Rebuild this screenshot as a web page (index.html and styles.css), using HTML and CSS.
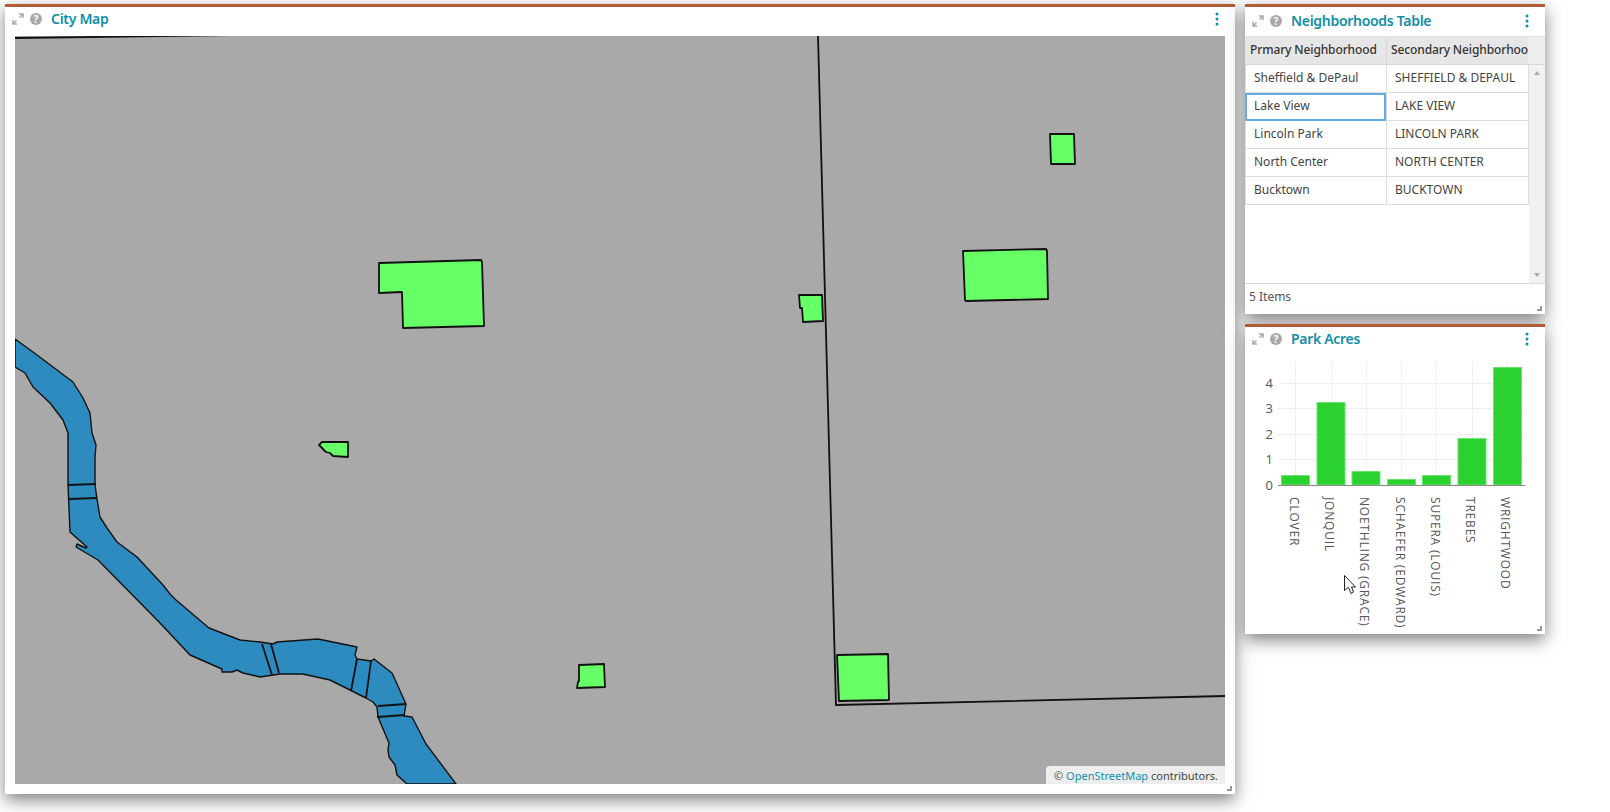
FILE: index.html
```html
<!DOCTYPE html>
<html lang="en">
<head>
<meta charset="utf-8">
<title>Dashboard</title>
<link rel="stylesheet" href="styles.css">
</head>
<body>
<div class="board">
  <section class="panel map-panel">
    <header class="panel-head map-head">
      <svg class="ico-expand" viewBox="0 0 12 12"><path d="M7 1h4v4M11 1L7.500 4.500M5 11H1V7M1 11l3.500-3.500" fill="none" stroke="#a9a9a9" stroke-width="1.500"/></svg>
      <span class="ico-help">?</span>
      <h2 class="panel-title">City Map</h2>
      <svg class="ico-menu" viewBox="0 0 4 14"><circle cx="2" cy="2" r="1.500"/><circle cx="2" cy="7" r="1.500"/><circle cx="2" cy="12" r="1.500"/></svg>
    </header>
    <div class="map">
      <svg class="map-svg" viewBox="15 36 1210 748">
        <path class="river" d="M15 339L33 352L73 382L83 398L90 413L92 433L96 445L95 457L95 485L97 499L100 517L107 528L117 542L137 557L163 585L170 594L176 600L209 628L240 640L260 642L273 644L277 642L318 639L357 647L355 655L357 659L371 661L374 659L392 673L406 704L404 716L412 717L426 744L456 784L407 784L397 775L395 765L389 757L388 750L389 743L378 717L377 707L373 702L366 698L352 691L330 680L303 674L280 674L260 677L243 673L237 670L232 672L222 672L222 669L190 655L160 623L98 560L76 547L77 544L86 548L87 547L70 532L68 485L68 433L63 420L50 403L33 387L25 373L15 367Z"/>
        <path class="line" d="M68 485L96 484M69 499L97 498M262 644L272 675M271 644L279 673M357 659L351 691M371 661L366 698M378 706L406 704M377 717L405 715"/>
        <path class="line" d="M15 38L240 35M818 36L836 705L1225 696"/>
        <path class="park" d="M379 263L481 260L482 262L484 326L403 328L402 292L379 293Z"/>
        <path class="park" d="M319 445L322 442L324 442L348 442L348 457L333 456L330 453L326 452Z"/>
        <path class="park" d="M799 295L822 295L823 321L803 322L802 308L800 308Z"/>
        <path class="park" d="M837 655L888 654L889 700L839 701Z"/>
        <path class="park" d="M1050 134L1074 134L1075 164L1051 164Z"/>
        <path class="park" d="M963 251L1046 249L1047 251L1048 299L966 301L965 300Z"/>
        <path class="park" d="M579 665L604 664L605 687L577 688L578 682L579 681Z"/>
      </svg>
      <div class="attribution">© <a class="attr-link">OpenStreetMap</a> contributors.</div>
    </div>
    <span class="grip"></span>
  </section>
  <div class="side">
    <section class="panel table-panel">
      <header class="panel-head side-head">
        <svg class="ico-expand" viewBox="0 0 12 12"><path d="M7 1h4v4M11 1L7.500 4.500M5 11H1V7M1 11l3.500-3.500" fill="none" stroke="#a9a9a9" stroke-width="1.500"/></svg>
        <span class="ico-help">?</span>
        <h2 class="panel-title">Neighborhoods Table</h2>
        <svg class="ico-menu" viewBox="0 0 4 14"><circle cx="2" cy="2" r="1.500"/><circle cx="2" cy="7" r="1.500"/><circle cx="2" cy="12" r="1.500"/></svg>
      </header>
      <div class="grid-head">
        <div class="th">Prmary Neighborhood</div>
        <div class="th th-second">Secondary Neighborhood</div>
        <div class="th-fill"></div>
      </div>
      <div class="grid-body">
        <div class="rows">
          <div class="row"><div class="td">Sheffield &amp; DePaul</div><div class="td">SHEFFIELD &amp; DEPAUL</div></div>
          <div class="row"><div class="td td-focus">Lake View</div><div class="td">LAKE VIEW</div></div>
          <div class="row"><div class="td">Lincoln Park</div><div class="td">LINCOLN PARK</div></div>
          <div class="row"><div class="td">North Center</div><div class="td">NORTH CENTER</div></div>
          <div class="row"><div class="td">Bucktown</div><div class="td">BUCKTOWN</div></div>
        </div>
        <div class="scrollbar"><span class="arrow-up"></span><span class="arrow-down"></span></div>
      </div>
      <div class="grid-foot">5 Items</div>
      <span class="grip"></span>
    </section>
    <section class="panel chart-panel">
      <header class="panel-head side-head chart-head">
        <svg class="ico-expand" viewBox="0 0 12 12"><path d="M7 1h4v4M11 1L7.500 4.500M5 11H1V7M1 11l3.500-3.500" fill="none" stroke="#a9a9a9" stroke-width="1.500"/></svg>
        <span class="ico-help">?</span>
        <h2 class="panel-title">Park Acres</h2>
        <svg class="ico-menu" viewBox="0 0 4 14"><circle cx="2" cy="2" r="1.500"/><circle cx="2" cy="7" r="1.500"/><circle cx="2" cy="12" r="1.500"/></svg>
      </header>
      <svg class="chart" viewBox="1245 356 300 278">
        <g class="grid-lines">
          <path d="M1278 383.500H1525M1278 408.500H1525M1278 434.500H1525M1278 459.500H1525"/>
          <path d="M1295.500 361V485M1331.500 361V485M1366.500 361V485M1401.500 361V485M1436.500 361V485M1472.500 361V485M1507.500 361V485"/>
        </g>
        <g class="bars">
          <rect x="1281.500" y="475.500" width="28" height="9.500"/>
          <rect x="1317" y="402.500" width="28" height="82.500"/>
          <rect x="1352" y="471.500" width="28" height="13.500"/>
          <rect x="1387.500" y="479.500" width="28" height="5.500"/>
          <rect x="1422.500" y="475.500" width="28" height="9.500"/>
          <rect x="1458" y="438.500" width="28" height="46.500"/>
          <rect x="1493.500" y="367.500" width="28" height="117.500"/>
        </g>
        <path class="axis" d="M1278 485.500H1525"/>
        <g class="ticks">
          <text x="1273" y="388">4</text>
          <text x="1273" y="413">3</text>
          <text x="1273" y="439">2</text>
          <text x="1273" y="464">1</text>
          <text x="1273" y="490">0</text>
        </g>
        <g class="cats">
          <text transform="translate(1290 497) rotate(90)">CLOVER</text>
          <text transform="translate(1325 497) rotate(90)">JONQUIL</text>
          <text transform="translate(1360 497) rotate(90)">NOETHLING (GRACE)</text>
          <text transform="translate(1396 497) rotate(90)">SCHAEFER (EDWARD)</text>
          <text transform="translate(1431 497) rotate(90)">SUPERA (LOUIS)</text>
          <text transform="translate(1466 497) rotate(90)">TREBES</text>
          <text transform="translate(1501 497) rotate(90)">WRIGHTWOOD</text>
        </g>
      </svg>
      <svg class="cursor" viewBox="0 0 12 19"><path d="M0.500 0.500V15.500L4 12.500H4.500L7 18.500L9.500 17L7.500 12H11.500Z" fill="#fff" stroke="#222" stroke-width="1"/></svg>
      <span class="grip"></span>
    </section>
  </div>
</div>
</body>
</html>
```
FILE: styles.css
```css
* { box-sizing: border-box; }
html, body { margin: 0; padding: 0; background: #fff; overflow: hidden; }
body { width: 1610px; height: 812px; font-family: "Noto Sans", sans-serif; color: #444; }
.board { display: flex; gap: 10px; padding: 4px 0 0 5px; align-items: flex-start; }
.panel { position: relative; background: #fff; border-top: 3px solid #b15c33; box-shadow: 0 6px 16px rgba(0,0,0,.5); }
.map-panel { width: 1230px; height: 790px; padding: 0 10px; }
.side { width: 300px; display: flex; flex-direction: column; gap: 10px; }
.table-panel { height: 310px; display: flex; flex-direction: column; }
.chart-panel { height: 310px; }
.panel-head { height: 29px; display: flex; align-items: center; }
.map-head { margin-left: -3px; padding-bottom: 6px; }
.side-head { padding: 0 0 2px 7px; }
.chart-head { padding-bottom: 5px; }
.ico-expand { width: 12px; height: 12px; flex: none; }
.ico-help { width: 12px; height: 12px; margin-left: 6px; border-radius: 50%; background: #a9a9a9; color: #fff; font: 700 10px/12px "Noto Sans", sans-serif; text-align: center; flex: none; }
.panel-title { margin: 0 0 0 9px; font-size: 14px; font-weight: 600; letter-spacing: -.3px; color: #0f8fa8; flex: 1; line-height: 20px; }
.ico-menu { width: 4px; height: 14px; fill: #0f8fa8; flex: none; margin-right: 16px; }
.map-panel .ico-menu { margin-right: 6px; }
.map { position: relative; height: 748px; background: #a9a9a9; overflow: hidden; }
.map-svg { display: block; width: 1210px; height: 748px; }
.river { fill: #2d8bc0; stroke: #111; stroke-width: 1.400; stroke-linejoin: round; }
.line { fill: none; stroke: #111; stroke-width: 1.800; }
.park { fill: #66ff66; stroke: #111; stroke-width: 1.800; stroke-linejoin: round; }
.attribution { position: absolute; right: 0; bottom: 0; height: 18px; padding: 2px 7px 0 8px; background: #eee; border-radius: 4px 0 0 0; font-size: 11px; line-height: 16px; color: #444; overflow: hidden; }
.attr-link { color: #0f8fa8; }
.grip { position: absolute; right: 3px; bottom: 3px; width: 5px; height: 5px; border-right: 2px solid #999; border-bottom: 2px solid #999; }
.grid-head { display: flex; height: 29px; background: #e6e6e6; font-size: 12px; font-weight: 500; letter-spacing: -.12px; line-height: 26px; color: #333; border-top: 1px solid #ddd; border-bottom: 1px solid #d8d8d8; flex: none; }
.th { width: 141px; padding-left: 5px; overflow: hidden; white-space: nowrap; flex: none; }
.th-second { width: 142px; padding-left: 4px; border-left: 1px solid #d4d4d4; }
.th-fill { flex: 1; background: #eee; }
.grid-body { display: flex; height: 219px; flex: none; border-bottom: 1px solid #ddd; }
.rows { width: 284px; flex: none; }
.row { display: flex; height: 28px; }
.td { width: 141px; height: 28px; padding-left: 8px; font-size: 12px; line-height: 25px; color: #444; border-left: 1px solid #ddd; border-bottom: 1px solid #ddd; white-space: nowrap; flex: none; }
.td + .td { width: 143px; border-right: 1px solid #ddd; }
.td-focus { border: 2px solid #63ade6; padding-left: 7px; line-height: 22px; }
.scrollbar { position: relative; flex: 1; background: #f1f1f1; }
.arrow-up, .arrow-down { position: absolute; left: 5px; width: 0; height: 0; border-left: 3.500px solid transparent; border-right: 3.500px solid transparent; }
.arrow-up { top: 6px; border-bottom: 4px solid #aaa; }
.arrow-down { bottom: 6px; border-top: 4px solid #aaa; }
.grid-foot { padding: 4px 0 0 4px; font-size: 12px; line-height: 18px; color: #555; }
.chart { display: block; width: 300px; height: 278px; }
.grid-lines path { fill: none; stroke: #f0f0f0; stroke-width: 1; }
.bars rect { fill: #2bd12f; stroke: #6ce46e; stroke-width: 1; }
.axis { fill: none; stroke: #888; stroke-width: 1; }
.ticks text { font: 13px "Open Sans", sans-serif; fill: #555; text-anchor: end; }
.cats text { font: 12px "Open Sans", sans-serif; letter-spacing: .8px; fill: #555; }
.cursor { position: absolute; left: 99px; top: 248px; width: 12px; height: 19px; }
```
